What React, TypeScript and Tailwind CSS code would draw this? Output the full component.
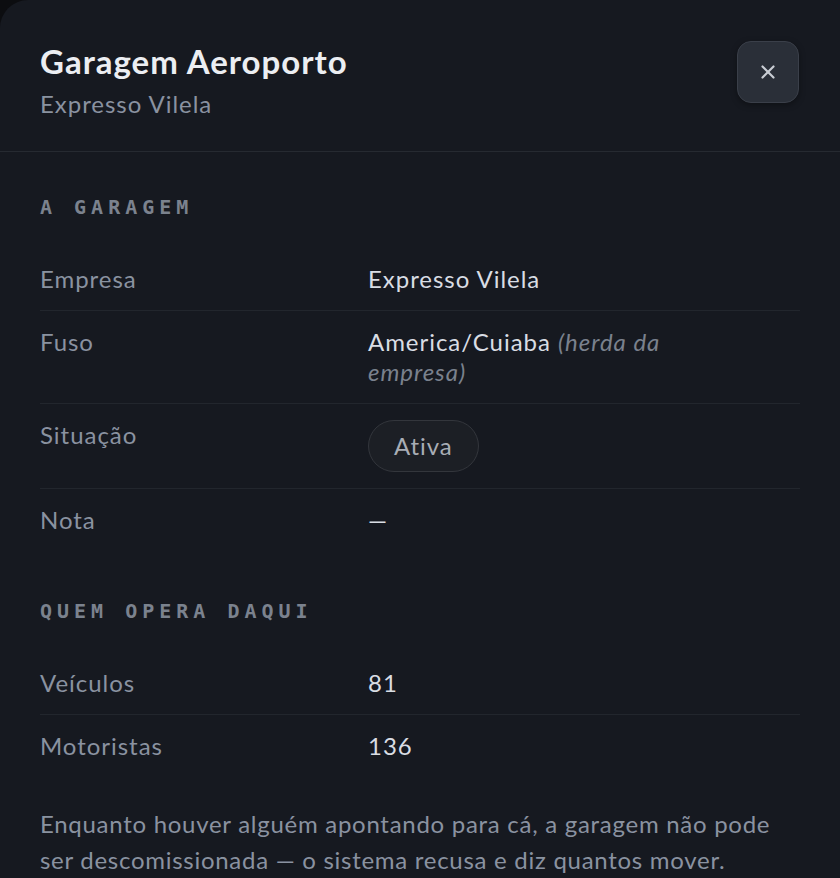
import { X } from "lucide-react";

const sans = { fontFamily: "Lato, 'Noto Sans', sans-serif" };

const SectionTitle = ({ children, className = "" }: { children: string; className?: string }) => (
  <h3
    className={`font-['DejaVu_Sans_Mono',monospace] text-[20px] leading-[24px] font-bold tracking-[0.25em] text-[#7b828e] uppercase ${className}`}
  >
    {children}
  </h3>
);

const Row = ({ label, children, last }: { label: string; children: React.ReactNode; last?: boolean }) => (
  <div
    className={`grid grid-cols-[328px_1fr] py-4 text-[24px] leading-[30px] tracking-[0.04em] ${
      last ? "" : "border-b border-[#22262d]"
    }`}
  >
    <div className="text-[#8a92a0]">{label}</div>
    <div className="text-[#d9dde4]">{children}</div>
  </div>
);

export default function App() {
  return (
    <div className="min-h-screen w-[840px] bg-[#0c0d10]" style={sans}>
      <div className="min-h-[878px] rounded-tl-[28px] bg-[#161920]">
        <header className="flex items-start justify-between border-b border-[#262a31] pl-10 pr-[41px] pt-[41px] pb-[31px]">
          <div>
            <h2 className="text-[33px] leading-[40px] font-bold tracking-[0.03em] text-[#eceef2]">
              Garagem Aeroporto
            </h2>
            <p className="mt-[7px] text-[24px] leading-[32px] tracking-[0.04em] text-[#8a92a0]">Expresso Vilela</p>
          </div>
          <button className="flex h-[62px] w-[62px] items-center justify-center rounded-[14px] border border-[#3a3f49] bg-[#2a2f38] text-[#c9cdd4] shadow-[0_2px_6px_rgba(0,0,0,0.35)]">
            <X size={22} strokeWidth={2.4} />
          </button>
        </header>

        <div className="px-10 pt-[43px]">
          <SectionTitle className="mb-[29px]">A garagem</SectionTitle>
          <Row label="Empresa">Expresso Vilela</Row>
          <Row label="Fuso">
            <p className="max-w-[330px]">
              America/Cuiaba <em className="text-[#7a818d]">(herda da empresa)</em>
            </p>
          </Row>
          <Row label="Situação">
            <span className="inline-flex h-[52px] items-center rounded-full border border-[#33363c] bg-[#1c1f25] px-[25px] text-[#a8adb5]">
              Ativa
            </span>
          </Row>
          <Row label="Nota" last>
            —
          </Row>

          <SectionTitle className="mt-12 mb-[29px]">Quem opera daqui</SectionTitle>
          <Row label="Veículos">81</Row>
          <Row label="Motoristas" last>
            136
          </Row>

          <p className="mt-[29px] text-[24px] leading-[36px] tracking-[0.03em] text-[#8a92a0]">
            Enquanto houver alguém apontando para cá, a garagem não pode ser descomissionada — o sistema recusa e diz
            quantos mover.
          </p>
        </div>
      </div>
    </div>
  );
}
